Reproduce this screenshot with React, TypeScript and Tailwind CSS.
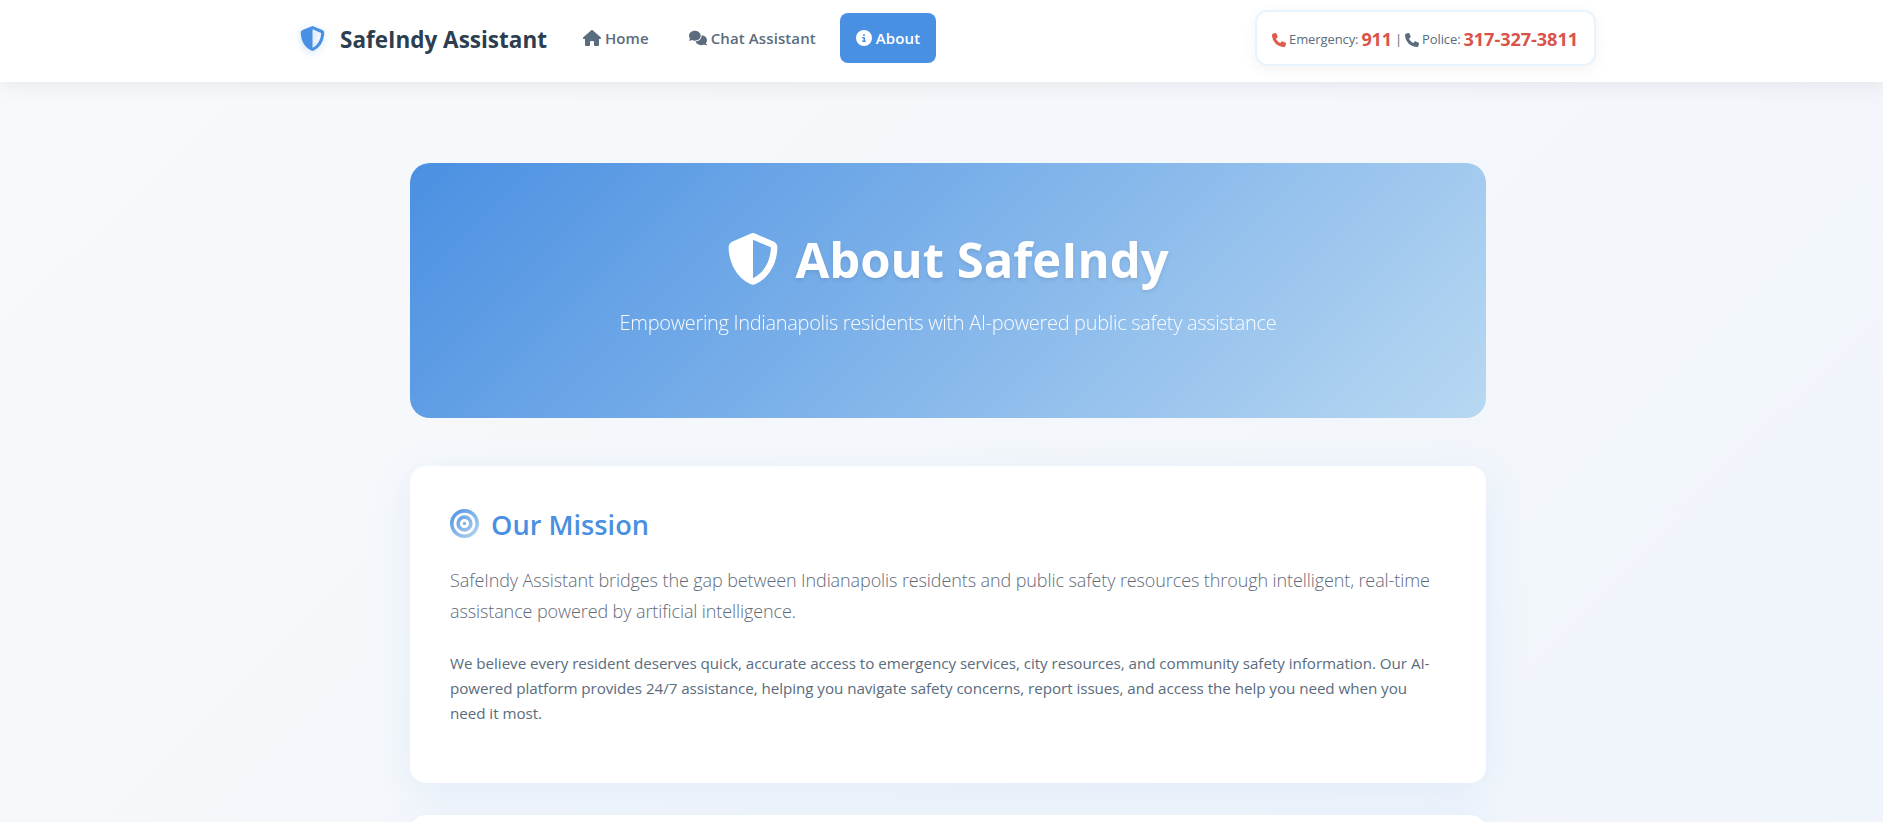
// App.tsx
import { FaBullseye, FaCircleInfo, FaComments, FaHouse, FaPhone, FaShieldHalved } from "react-icons/fa6";

const font = "font-['Open_Sans','Noto_Sans',sans-serif]";

const navLinks = [
  { label: "Home", icon: <FaHouse size={18} />, active: false },
  { label: "Chat Assistant", icon: <FaComments size={18} />, active: false },
  { label: "About", icon: <FaCircleInfo size={16} />, active: true },
];

const App = () => {
  return (
    <div className={`${font} h-[822px] overflow-hidden bg-[linear-gradient(135deg,#f8f9fb_0%,#f0f5fb_100%)]`}>
      {/* Navbar */}
      <header className="relative z-10 h-[82px] bg-white shadow-[0_2px_20px_rgba(0,0,0,0.08)]">
        <div className="flex h-full items-center pr-[287px] pb-[6px] pl-[300px]">
          <a href="#" className="flex items-center gap-[15px] text-[#2c3e50]">
            <FaShieldHalved size={25} className="text-[#4a90e2] drop-shadow-[0_2px_4px_rgba(74,144,226,0.3)]" />
            <span className="pt-[4px] text-[22.5px] leading-none font-bold">SafeIndy Assistant</span>
          </a>

          <nav className="ml-[20px] flex items-center gap-[8px]">
            {navLinks.map((link) => (
              <a
                key={link.label}
                href="#"
                className={`flex h-[50px] items-center gap-[4px] rounded-[8px] px-[16px] text-[15px] font-semibold tracking-[0.1px] ${
                  link.active ? "bg-[#4a90e2] text-white" : "text-[#5a6c7d]"
                }`}
              >
                {link.icon}
                {link.label}
              </a>
            ))}
          </nav>

          <div className="ml-auto flex h-[56px] items-center gap-[3px] rounded-[12px] border-2 border-[#e8f4fd] bg-white pt-[3px] pr-[16px] pl-[15px] text-[13px] tracking-[-0.1px] whitespace-nowrap text-[#5a6c7d] shadow-[0_4px_15px_rgba(0,0,0,0.05)]">
            <FaPhone size={14} className="text-[#e05a4e]" />
            <span>Emergency:</span>
            <span className="text-[18px] font-bold text-[#d9534a]">911</span>
            <span>|</span>
            <FaPhone size={14} />
            <span>Police:</span>
            <span className="text-[18.2px] font-bold text-[#d9534a]">317-327-3811</span>
          </div>
        </div>
      </header>

      <main className="ml-[410px] w-[1076px] pt-[81px]">
        {/* Hero */}
        <section className="flex h-[255px] flex-col items-center rounded-[20px] bg-[linear-gradient(135deg,#4a90e2_0%,#b8d8f2_100%)] pt-[60px] text-white">
          <h1 className="flex items-center gap-[16px] text-[49px] leading-[72px] font-bold [text-shadow:0_2px_4px_rgba(0,0,0,0.1)]">
            <FaShieldHalved size={52} />
            About SafeIndy
          </h1>
          <p className="mt-[13px] text-[20px] leading-[30px] font-light tracking-[-0.32px] opacity-95">
            Empowering Indianapolis residents with AI-powered public safety assistance
          </p>
        </section>

        {/* Mission */}
        <section className="mt-[48px] h-[317px] rounded-[16px] bg-white px-[40px] pt-[38px] shadow-[0_10px_40px_rgba(74,144,226,0.1)]">
          <h2 className="flex items-center gap-[12px] text-[27.2px] leading-[42px] font-semibold text-[#4a90e2]">
            <svg width="0" height="0" className="absolute">
              <linearGradient id="targetFill" x1="0" y1="0" x2="1" y2="1">
                <stop offset="0" stopColor="#4a90e2" />
                <stop offset="1" stopColor="#b8d8f2" />
              </linearGradient>
            </svg>
            <FaBullseye size={29} className="mb-[4px] fill-[url(#targetFill)]" />
            Our Mission
          </h2>
          <p className="mt-[19px] text-[18px] leading-[31px] font-light tracking-[-0.1px] text-[#5f6b7a]">
            SafeIndy Assistant bridges the gap between Indianapolis residents and public safety resources through
            intelligent, real-time assistance powered by artificial intelligence.
          </p>
          <p className="mt-[24px] text-[15.2px] leading-[25.2px] tracking-[-0.05px] text-[#5a6c7d]">
            We believe every resident deserves quick, accurate access to emergency services, city resources, and
            community safety information. Our AI-powered platform provides 24/7 assistance, helping you navigate safety
            concerns, report issues, and access the help you need when you need it most.
          </p>
        </section>

        {/* Next card, cut off by the window */}
        <section className="mt-[32px] h-[300px] rounded-[16px] bg-white shadow-[0_10px_40px_rgba(74,144,226,0.1)]" />
      </main>
    </div>
  );
};

export default App;
